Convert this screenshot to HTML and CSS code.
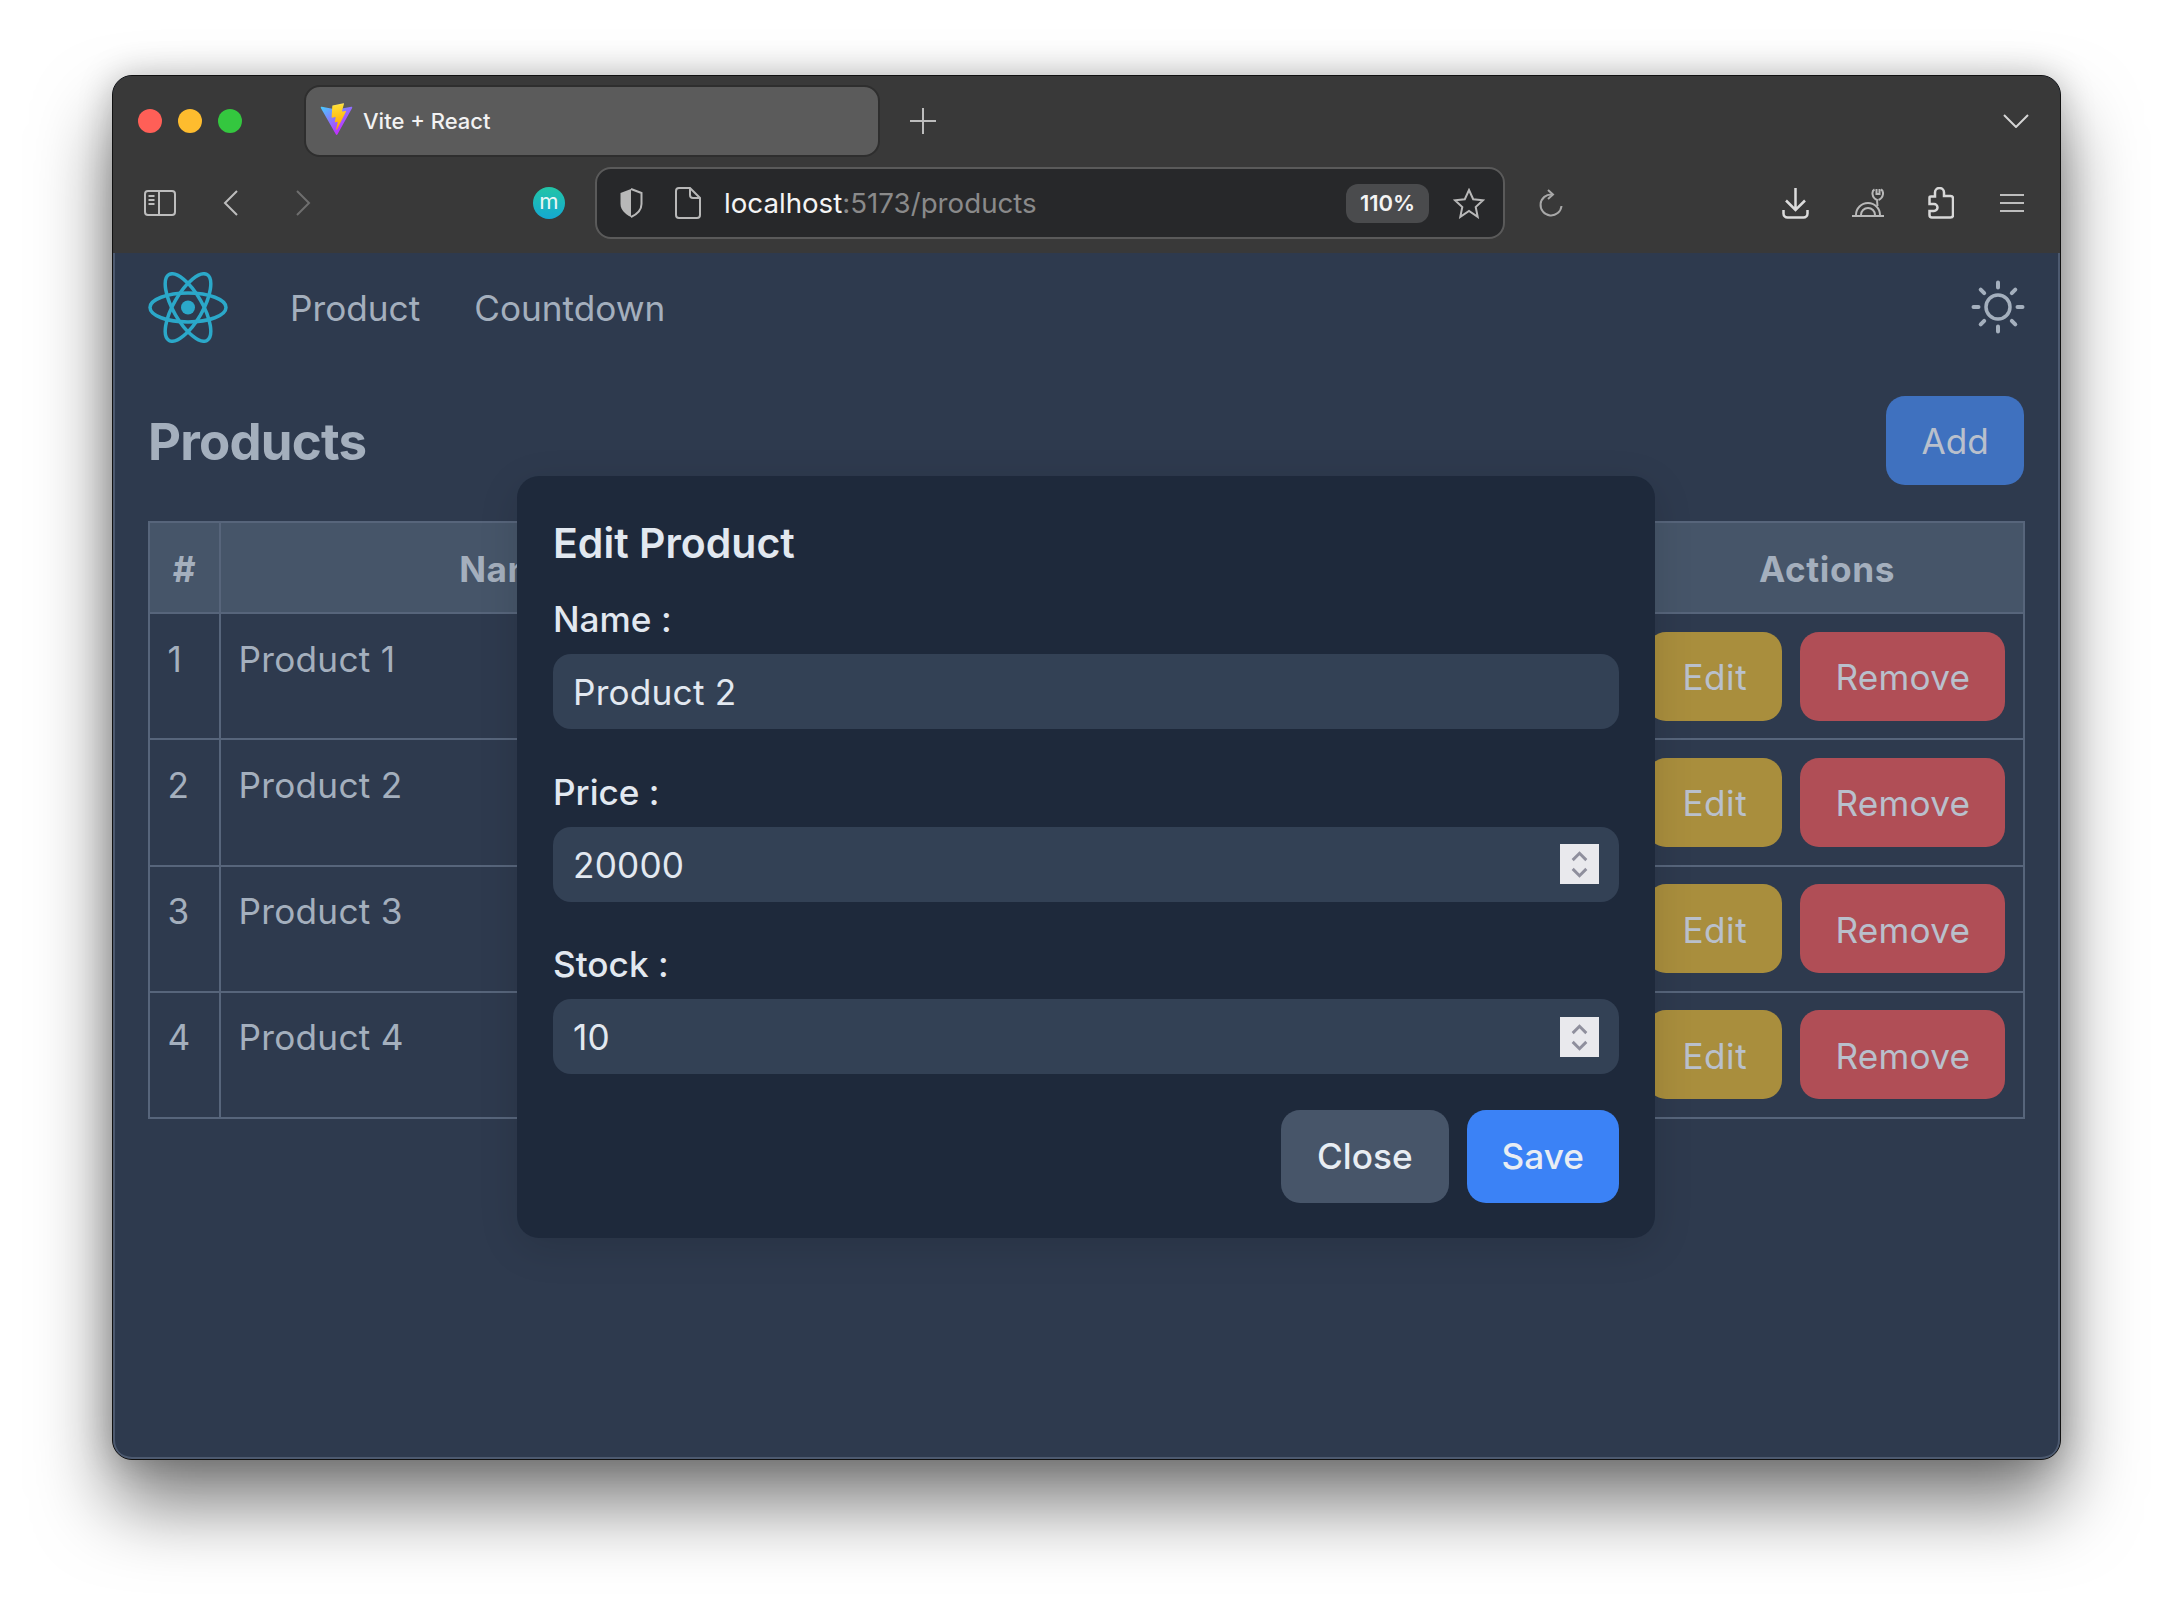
FILE: index.html
```html
<!DOCTYPE html>
<html lang="en">
<head>
  <meta charset="UTF-8">
  <title>Vite + React</title>
  <link rel="stylesheet" href="styles.css">
</head>
<body>

  <div class="window">
    <div class="tabstrip">
      <span class="light red"></span>
      <span class="light yellow"></span>
      <span class="light green"></span>
      <div class="tab">
        <svg class="favicon" viewBox="0 0 410 404">
          <defs>
            <linearGradient id="viteA" x1="6" y1="33" x2="235" y2="344" gradientUnits="userSpaceOnUse">
              <stop offset="0" stop-color="#41d1ff"/>
              <stop offset="1" stop-color="#bd34fe"/>
            </linearGradient>
            <linearGradient id="viteB" x1="194" y1="8" x2="236" y2="292" gradientUnits="userSpaceOnUse">
              <stop offset="0" stop-color="#ffea83"/>
              <stop offset=".08" stop-color="#ffdd35"/>
              <stop offset="1" stop-color="#ffa800"/>
            </linearGradient>
          </defs>
          <path fill="url(#viteA)" d="M399.641 59.5246L215.643 388.545C211.844 395.338 202.084 395.378 198.228 388.618L10.5817 59.5563C6.38087 52.1896 12.6802 43.2665 21.0281 44.7586L205.223 77.6824C206.398 77.8924 207.601 77.8904 208.776 77.6763L389.119 44.8058C397.439 43.2894 403.768 52.1434 399.641 59.5246Z"/>
          <path fill="url(#viteB)" d="M292.965 1.5744L156.801 28.2552C154.563 28.6937 152.906 30.5903 152.771 32.8664L144.395 174.33C144.198 177.662 147.258 180.248 150.51 179.498L188.42 170.749C191.967 169.931 195.172 173.055 194.443 176.622L183.18 231.775C182.422 235.487 185.907 238.661 189.532 237.56L212.947 230.446C216.577 229.344 220.065 232.527 219.297 236.242L201.398 322.875C200.278 328.294 207.486 331.249 210.492 326.603L212.5 323.5L323.454 102.072C325.312 98.3645 322.108 94.137 318.036 94.9228L279.014 102.454C275.347 103.161 272.227 99.746 273.262 96.1583L298.731 7.86689C299.767 4.27314 296.636 0.855181 292.965 1.5744Z"/>
        </svg>
        <span class="tab-title">Vite + React</span>
      </div>
      <svg class="new-tab" viewBox="0 0 28 28"><path d="M14 1v26M1 14h26"/></svg>
      <svg class="tab-list" viewBox="0 0 26 14"><path d="M1 1l12 12L25 1"/></svg>
    </div>

    <div class="toolbar">
      <svg class="tb-sidebar" viewBox="0 0 32 26"><rect x="1" y="1" width="30" height="24" rx="3"/><path d="M15 1v24M4.500 6h6M4.500 10h6M4.500 14h6"/></svg>
      <svg class="tb-back" viewBox="0 0 15 26"><path d="M14 1L2 13l12 12"/></svg>
      <svg class="tb-forward" viewBox="0 0 15 26"><path d="M1 1l12 12L1 25"/></svg>
      <span class="badge-m">m</span>

      <div class="urlbar">
        <svg class="url-shield" viewBox="0 0 24 30"><path class="fill" d="M12 1L1.500 5v11c0 6 5 10.500 10.500 13z"/><path d="M12 1l10.500 4v11c0 6-5 10.500-10.500 13"/></svg>
        <svg class="url-doc" viewBox="0 0 26 32"><path d="M4 1h11l10 10v17a3 3 0 0 1-3 3H4a3 3 0 0 1-3-3V4a3 3 0 0 1 3-3z"/><path d="M15 1v7a3 3 0 0 0 3 3h7"/></svg>
        <span class="url-text">localhost<span class="url-dim">:5173/products</span></span>
        <span class="zoom-badge">110%</span>
        <svg class="url-star" viewBox="0 0 32 31"><path d="M16 2l4.200 9.200 9.800 1.100-7.300 6.700 2 9.900L16 23l-8.700 5.900 2-9.900L2 12.300l9.800-1.100z"/></svg>
      </div>

      <svg class="tb-reload" viewBox="0 0 24 29"><path d="M13 5.500A10.500 10.500 0 1 0 22.500 17"/><path d="M9 1l5 4.500L9 10"/></svg>
      <span class="spacer"></span>
      <svg class="tb-download" viewBox="0 0 27 31"><path d="M13.500 0v22M4 12.500l9.500 9.500L23 12.500"/><path d="M1.500 22v3.500a4 4 0 0 0 4 4h16a4 4 0 0 0 4-4V22"/></svg>
      <svg class="tb-snail" viewBox="0 0 32 30"><path d="M0 28h32M4 27a12 12 0 0 1 24 0M9 27a7 7 0 0 1 14 0"/><path d="M22.500 1.500c-3 1.500-3 8 2.500 10.500l.5 6M29 1.500c3 1.500 3 8-2.500 10.500M24.500 1v5h3V1"/></svg>
      <svg class="tb-puzzle" viewBox="0 0 26 32"><path d="M1.500 10.500q0-1 1.500-1H7V5.500a4.500 4.500 0 0 1 9 0V9h6.500a2.500 2.500 0 0 1 2.500 2.500V28a2.500 2.500 0 0 1-2.500 2.500H4A2.500 2.500 0 0 1 1.500 28V24H6a3.500 3.500 0 0 0 0-7H1.500z"/></svg>
      <svg class="tb-menu" viewBox="0 0 24 18"><path d="M0 1h24M0 9h24M0 17h24"/></svg>
    </div>

    <div class="app">
      <nav class="navbar">
        <svg class="react-logo" viewBox="-40 -35.500 80 71">
          <circle r="7"/>
          <g class="orbit">
            <ellipse rx="38" ry="14.500"/>
            <ellipse rx="38" ry="14.500" transform="rotate(60)"/>
            <ellipse rx="38" ry="14.500" transform="rotate(120)"/>
          </g>
        </svg>
        <a class="nav-link">Product</a>
        <a class="nav-link">Countdown</a>
        <svg class="sun" viewBox="0 0 54 54">
          <circle cx="27" cy="27" r="12"/>
          <path d="M27 2.500v5M27 46.500v5M2.500 27h5M46.500 27h5M9.700 9.700l3.500 3.500M40.800 40.800l3.500 3.500M9.700 44.300l3.500-3.500M40.800 13.200l3.500-3.500"/>
        </svg>
      </nav>

      <div class="page-head">
        <h1>Products</h1>
        <button class="btn btn-add">Add</button>
      </div>

      <table class="products">
        <colgroup>
          <col class="col-num"><col class="col-name"><col class="col-price"><col class="col-stock"><col class="col-actions">
        </colgroup>
        <thead>
          <tr><th>#</th><th>Name</th><th>Price</th><th>Stock</th><th>Actions</th></tr>
        </thead>
        <tbody>
          <tr>
            <td>1</td><td>Product 1</td><td></td><td></td>
            <td><div class="actions"><button class="btn btn-edit">Edit</button><button class="btn btn-remove">Remove</button></div></td>
          </tr>
          <tr>
            <td>2</td><td>Product 2</td><td></td><td></td>
            <td><div class="actions"><button class="btn btn-edit">Edit</button><button class="btn btn-remove">Remove</button></div></td>
          </tr>
          <tr>
            <td>3</td><td>Product 3</td><td></td><td></td>
            <td><div class="actions"><button class="btn btn-edit">Edit</button><button class="btn btn-remove">Remove</button></div></td>
          </tr>
          <tr>
            <td>4</td><td>Product 4</td><td></td><td></td>
            <td><div class="actions"><button class="btn btn-edit">Edit</button><button class="btn btn-remove">Remove</button></div></td>
          </tr>
        </tbody>
      </table>

      <div class="modal">
        <h2>Edit Product</h2>
        <label class="field-label">Name :</label>
        <div class="field"><input type="text" value="Product 2"></div>
        <label class="field-label">Price :</label>
        <div class="field">
          <input type="text" value="20000">
          <span class="spinner"><svg viewBox="0 0 40 40"><path d="M13 16l7-7 7 7M13 25l7 7 7-7"/></svg></span>
        </div>
        <label class="field-label">Stock :</label>
        <div class="field">
          <input type="text" value="10">
          <span class="spinner"><svg viewBox="0 0 40 40"><path d="M13 16l7-7 7 7M13 25l7 7 7-7"/></svg></span>
        </div>
        <div class="modal-actions">
          <button class="btn btn-close">Close</button>
          <button class="btn btn-save">Save</button>
        </div>
      </div>
    </div>
  </div>

</body>
</html>
```

FILE: styles.css
```css
* {
  box-sizing: border-box;
}

html, body {
  margin: 0;
  height: 100%;
  background-color: #fff;
  overflow: hidden;
}

body {
  padding: 75px 0 0 112px;
  font-family: Inter, 'Liberation Sans', sans-serif;
}

svg {
  display: block;
  flex: none;
  fill: none;
  stroke-width: 2;
}

/* browser window */
.window {
  width: 1949px;
  height: 1385px;
  display: flex;
  flex-direction: column;
  border: 1px solid #111;
  border-radius: 20px;
  overflow: hidden;
  box-shadow: 0 44px 76px rgba(0, 0, 0, .52), 0 0 34px rgba(0, 0, 0, .22);
  background-color: #2e3a4e;
}

.tabstrip {
  height: 89px;
  flex: none;
  display: flex;
  align-items: center;
  padding: 0 31px 0 25px;
  background-color: #393939;
}

.light {
  width: 24px;
  height: 24px;
  margin-right: 16px;
  border-radius: 50%;
}

.red { background-color: #ff5f57; }
.yellow { background-color: #febc2e; }
.green { background-color: #34c73f; }

.tab {
  width: 576px;
  height: 72px;
  margin-left: 46px;
  display: flex;
  align-items: center;
  padding-left: 14px;
  background-color: #5b5b5b;
  border: 2px solid #2e2e2e;
  border-radius: 16px;
}

.favicon {
  width: 33px;
  height: 33px;
  margin-top: -2px;
}

.tab-title {
  margin-left: 10px;
  font-size: 22px;
  font-weight: 500;
  color: #f2f2f2;
}

.new-tab {
  width: 28px;
  height: 28px;
  margin-left: 29px;
  stroke: #bdbdbd;
}

.tab-list {
  width: 26px;
  height: 14px;
  margin-left: auto;
  stroke: #d5d5d5;
}

.toolbar {
  height: 88px;
  flex: none;
  display: flex;
  align-items: center;
  padding-right: 36px;
  padding-bottom: 12px;
  background-color: #393939;
}

.tb-sidebar { width: 32px; height: 26px; margin-left: 31px; stroke: #bdbdbd; }
.tb-back { width: 15px; height: 26px; margin-left: 47px; stroke: #bdbdbd; }
.tb-forward { width: 15px; height: 26px; margin-left: 58px; stroke: #6e6e6e; }

.badge-m {
  width: 32px;
  height: 32px;
  margin-left: 222px;
  border-radius: 50%;
  display: flex;
  align-items: center;
  justify-content: center;
  padding-bottom: 4px;
  font-size: 22px;
  color: #e8f6f6;
  background: linear-gradient(#22c5a6, #14a8d2);
}

.urlbar {
  width: 910px;
  height: 72px;
  margin-left: 30px;
  display: flex;
  align-items: center;
  padding-left: 22px;
  background-color: #27282a;
  border: 2px solid #5a5a5a;
  border-radius: 16px;
}

.url-shield { width: 24px; height: 30px; stroke: #b8b8b8; }
.url-shield .fill { fill: #b8b8b8; stroke: none; }
.url-doc { width: 26px; height: 32px; margin-left: 32px; stroke: #b8b8b8; }

.url-text {
  margin-left: 23px;
  font-size: 27.700px;
  color: #f4f4f4;
}

.url-dim { color: #8a8a8a; }

.zoom-badge {
  width: 83px;
  height: 39px;
  margin-left: auto;
  display: flex;
  align-items: center;
  justify-content: center;
  font-size: 22px;
  font-weight: 600;
  color: #f4f4f4;
  background-color: #4a4b4d;
  border-radius: 12px;
}

.url-star { width: 32px; height: 31px; margin: 0 18px 0 24px; stroke: #b8b8b8; }

.tb-reload { width: 24px; height: 29px; margin-left: 34px; stroke: #a8a8a8; }
.spacer { flex: 1; }
.tb-download { width: 27px; height: 31px; stroke: #dcdcdc; stroke-width: 2.500; }
.tb-snail { width: 32px; height: 30px; margin-left: 43px; stroke: #b8b8b8; }
.tb-puzzle { width: 26px; height: 32px; margin-left: 44px; stroke: #d8d8d8; stroke-width: 2.500; }
.tb-menu { width: 24px; height: 18px; margin-left: 46px; stroke: #bdbdbd; }

/* the page inside the browser */
.app {
  position: relative;
  flex: 1;
  padding: 0 36px 0 35px;
  color: #a4afbd;
  font-size: 35.2px;
  border-radius: 0 0 19px 19px;
  box-shadow: inset 2px 0 #4d5a70, inset -2px 0 #4d5a70, inset 0 -2px #4d5a70;
}

.navbar {
  height: 108px;
  display: flex;
  align-items: center;
}

.react-logo {
  width: 80px;
  height: 71px;
  margin-right: 62px;
}

.react-logo circle { fill: #2ba8c9; }
.react-logo .orbit { stroke: #2ba8c9; stroke-width: 3.500; }

.nav-link {
  margin-right: 54px;
  padding-top: 2px;
}

.sun {
  width: 54px;
  height: 54px;
  margin-left: auto;
  margin-right: -1px;
  stroke: #a4afbd;
  stroke-width: 3.500;
  stroke-linecap: round;
}

.sun path {
  stroke-width: 4;
}

.page-head {
  display: flex;
  align-items: center;
  justify-content: space-between;
  margin-top: 35px;
}

h1 {
  margin: 0;
  padding-top: 2px;
  font-size: 51px;
  font-weight: 700;
  letter-spacing: -.8px;
}

.btn {
  height: 89px;
  padding: 0 35.2px;
  border: none;
  border-radius: 19px;
  font-family: inherit;
  font-size: 35.2px;
  color: #b9c0cc;
}

.btn-add { background-color: #3f71bf; }
.btn-edit { padding-top: 2px; letter-spacing: .5px; background-color: #a98e3d; }
.btn-remove { padding-top: 2px; letter-spacing: .2px; background-color: #b04e56; }

.products {
  width: 1875px;
  margin-top: 36px;
  table-layout: fixed;
  border-collapse: collapse;
}

.col-num { width: 71px; }
.col-name { width: 581px; }
.col-price { width: 433px; }
.col-stock { width: 396px; }
.col-actions { width: 394px; }

th, td {
  border: 2px solid #57657b;
  padding: 17.600px;
  line-height: 52.8px;
}

th {
  height: 91px;
  padding-top: 19px;
  padding-bottom: 16px;
  font-weight: 700;
  letter-spacing: .6px;
  background-color: #465569;
}

td {
  height: 126.300px;
  padding-top: 18.600px;
  padding-bottom: 16.600px;
  vertical-align: top;
  letter-spacing: .25px;
}

.actions {
  display: flex;
  justify-content: flex-end;
  gap: 18px;
  margin-top: -1px;
}

/* edit dialog */
.modal {
  position: absolute;
  top: 223px;
  left: 404px;
  width: 1138px;
  padding: 35px 36px 35px;
  background-color: #1e293b;
  border-radius: 22px;
  box-shadow: 0 10px 40px rgba(0, 0, 0, .12);
  color: #e2e8f0;
}

h2 {
  margin: 0 0 18px;
  font-size: 41px;
  line-height: 64px;
  font-weight: 600;
}

.field-label {
  display: block;
  margin-bottom: 9px;
  line-height: 52px;
  font-weight: 500;
}

.field {
  height: 75px;
  display: flex;
  align-items: center;
  padding: 0 20px;
  margin-bottom: 36.500px;
  background-color: #334155;
  border-radius: 18px;
}

.field input {
  flex: 1;
  min-width: 0;
  border: none;
  outline: none;
  background: none;
  padding: 1px 0 0;
  font-family: inherit;
  font-size: 35.2px;
  letter-spacing: .2px;
  color: #e2e8f0;
}

.spinner {
  width: 39px;
  height: 40px;
  background-color: #e9e9ed;
  stroke: #8f8f9d;
}

.spinner svg {
  width: 39px;
  height: 40px;
  stroke-width: 3;
}

.modal-actions {
  display: flex;
  justify-content: flex-end;
  gap: 18px;
  margin-top: -1px;
}

.btn-close, .btn-save {
  height: 93px;
  padding: 0 36px;
  font-weight: 500;
  color: #e8edf3;
}

.btn-close { background-color: #475569; }
.btn-save { padding: 0 35px; background-color: #3b82f6; }
```
